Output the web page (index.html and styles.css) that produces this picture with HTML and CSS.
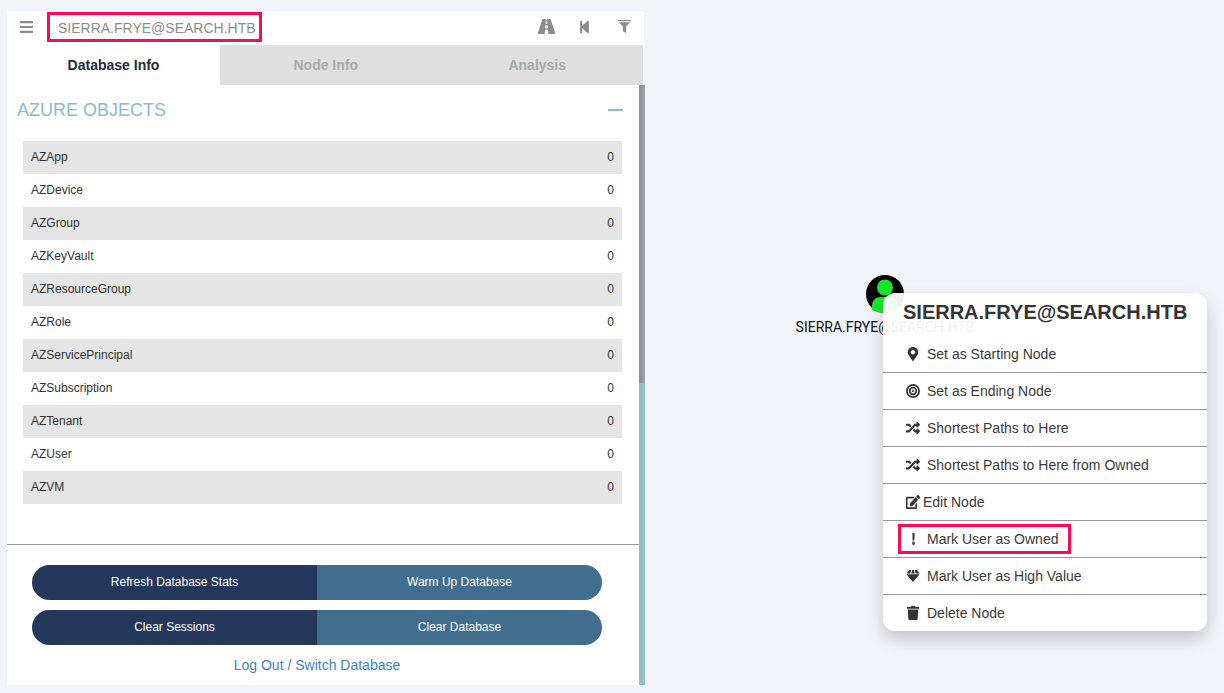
FILE: index.html
```html
<!DOCTYPE html>
<html lang="en">
<head>
  <meta charset="UTF-8">
  <title>BloodHound</title>
  <link rel="stylesheet" href="styles.css">
</head>
<body>

  <svg class="defs" width="0" height="0">
    <symbol id="i-random" viewBox="0 0 512 512"><path d="M504.971 359.029c9.373 9.373 9.373 24.569 0 33.941l-80 79.984c-15.01 15.01-40.971 4.49-40.971-16.971V416h-58.785a12.004 12.004 0 0 1-8.773-3.812l-70.556-75.596 53.333-57.143L352 336h32v-39.981c0-21.438 25.943-31.998 40.971-16.971l80 79.981zM12 176h84l52.781 56.551 53.333-57.143-70.556-75.596A11.999 11.999 0 0 0 122.785 96H12c-6.627 0-12 5.373-12 12v56c0 6.627 5.373 12 12 12zm372 0v39.984c0 21.46 25.961 31.98 40.971 16.971l80-79.984c9.373-9.373 9.373-24.569 0-33.941l-80-79.981C409.943 24.021 384 34.582 384 56.019V96h-58.785a12.004 12.004 0 0 0-8.773 3.812L96 336H12c-6.627 0-12 5.373-12 12v56c0 6.627 5.373 12 12 12h110.785c3.326 0 6.503-1.381 8.773-3.812L352 176h32z"/></symbol>
  </svg>

  <aside class="panel">
    <div class="topbar">
      <svg class="bar-icon menu-icon" viewBox="0 60 448 392" preserveAspectRatio="none"><path d="M16 132h416c8.837 0 16-7.163 16-16V76c0-8.837-7.163-16-16-16H16C7.163 60 0 67.163 0 76v40c0 8.837 7.163 16 16 16zm0 160h416c8.837 0 16-7.163 16-16v-40c0-8.837-7.163-16-16-16H16c-8.837 0-16 7.163-16 16v40c0 8.837 7.163 16 16 16zm0 160h416c8.837 0 16-7.163 16-16v-40c0-8.837-7.163-16-16-16H16c-8.837 0-16 7.163-16 16v40c0 8.837 7.163 16 16 16z"/></svg>
      <div class="search">SIERRA.FRYE@SEARCH.HTB</div>
      <div class="bar-actions">
        <svg class="bar-icon road-icon" viewBox="0 64 576 384" preserveAspectRatio="none"><path d="M573.19 402.67l-139.79-320C428.43 71.29 417.6 64 405.68 64h-97.59l2.45 23.16c.5 4.72-3.21 8.84-7.96 8.84h-29.16c-4.75 0-8.46-4.12-7.96-8.84L267.91 64h-97.59c-11.93 0-22.76 7.29-27.73 18.67L2.8 402.67C-6.45 423.86 8.31 448 30.54 448h196.84l10.31-97.68c.86-8.14 7.72-14.32 15.91-14.32h68.8c8.19 0 15.05 6.18 15.91 14.32L348.62 448h196.84c22.23 0 36.99-24.14 27.73-45.33zM260.4 135.16a8 8 0 0 1 7.96-7.16h39.29c4.09 0 7.53 3.09 7.96 7.16l4.6 43.58c.75 7.09-4.81 13.26-11.93 13.26h-40.54c-7.13 0-12.68-6.17-11.93-13.26l4.59-43.58zM315.64 304h-55.29c-9.5 0-16.91-8.23-15.91-17.68l5.07-48c.86-8.14 7.72-14.32 15.91-14.32h45.15c8.19 0 15.05 6.18 15.91 14.32l5.07 48c1 9.45-6.41 17.68-15.91 17.68z"/></svg>
        <svg class="bar-icon back-icon" viewBox="0 0 448 512"><path d="M64 468V44c0-6.6 5.4-12 12-12h48c6.6 0 12 5.4 12 12v176.4l195.5-181C352 20.9 384 35.3 384 64v384c0 28.7-32 43.1-52.5 24.5L136 291.7V468c0 6.6-5.4 12-12 12H76c-6.6 0-12-5.4-12-12z"/></svg>
        <svg class="bar-icon filter-icon" viewBox="0 0 512 512"><path d="M0 0h512v50H0zM30 90h452L320 250v262l-128-70V250z"/></svg>
      </div>
    </div>

    <div class="tabs">
      <div class="tab tab-active">Database Info</div>
      <div class="tab">Node Info</div>
      <div class="tab">Analysis</div>
    </div>

    <div class="panel-body">
      <div class="panel-main">
        <div class="stats">
          <div class="stats-head">
            <h3>AZURE OBJECTS</h3>
            <span class="collapse"></span>
          </div>
          <table class="stats-table">
            <tr><td>AZApp</td><td class="num">0</td></tr>
            <tr><td>AZDevice</td><td class="num">0</td></tr>
            <tr><td>AZGroup</td><td class="num">0</td></tr>
            <tr><td>AZKeyVault</td><td class="num">0</td></tr>
            <tr><td>AZResourceGroup</td><td class="num">0</td></tr>
            <tr><td>AZRole</td><td class="num">0</td></tr>
            <tr><td>AZServicePrincipal</td><td class="num">0</td></tr>
            <tr><td>AZSubscription</td><td class="num">0</td></tr>
            <tr><td>AZTenant</td><td class="num">0</td></tr>
            <tr><td>AZUser</td><td class="num">0</td></tr>
            <tr><td>AZVM</td><td class="num">0</td></tr>
          </table>
        </div>
        <div class="db-actions">
          <div class="btn-pair">
            <button class="btn btn-dark">Refresh Database Stats</button>
            <button class="btn btn-light">Warm Up Database</button>
          </div>
          <div class="btn-pair">
            <button class="btn btn-dark">Clear Sessions</button>
            <button class="btn btn-light">Clear Database</button>
          </div>
          <a class="logout" href="#">Log Out / Switch Database</a>
        </div>
      </div>
      <div class="scrollbar"><div class="thumb"></div></div>
    </div>
  </aside>

  <div class="node">
    <svg class="node-icon" viewBox="0 0 38 38">
      <circle cx="19" cy="19" r="19" fill="#000"/>
      <circle cx="19" cy="12.5" r="8" fill="#17e62f"/>
      <path d="M6 35v-4c0-6 4-9 9-9h8c5 0 9 3 9 9v4c-3 2-8 3-13 3s-10-1-13-3z" fill="#17e62f"/>
    </svg>
    <div class="node-label">SIERRA.FRYE@SEARCH.HTB</div>
  </div>

  <div class="context-menu">
    <div class="menu-title">SIERRA.FRYE@SEARCH.HTB</div>
    <div class="menu-row">
      <svg class="menu-ico" viewBox="0 0 384 512"><path d="M172.268 501.67C26.97 291.031 0 269.413 0 192 0 85.961 85.961 0 192 0s192 85.961 192 192c0 77.413-26.97 99.031-172.268 309.67-9.535 13.774-29.93 13.773-39.464 0zM192 272c44.183 0 80-35.817 80-80s-35.817-80-80-80-80 35.817-80 80 35.817 80 80 80z"/></svg>
      Set as Starting Node
    </div>
    <div class="menu-row">
      <svg class="menu-ico ico-target" viewBox="0 0 14 14">
        <circle cx="7" cy="7" r="6.1"/>
        <circle cx="7" cy="7" r="3.3"/>
        <circle class="target-dot" cx="7" cy="7" r="1.1"/>
      </svg>
      Set as Ending Node
    </div>
    <div class="menu-row">
      <svg class="menu-ico"><use href="#i-random"/></svg>
      Shortest Paths to Here
    </div>
    <div class="menu-row">
      <svg class="menu-ico"><use href="#i-random"/></svg>
      Shortest Paths to Here from Owned
    </div>
    <div class="menu-row menu-row-tight">
      <svg class="menu-ico ico-edit" viewBox="0 0 576 512" preserveAspectRatio="none"><path d="M402.6 83.2l90.2 90.2c3.8 3.8 3.8 10 0 13.8L274.4 405.6l-92.8 10.3c-12.4 1.4-22.9-9.1-21.5-21.5l10.3-92.8L388.8 83.2c3.8-3.8 10-3.8 13.8 0zm162-22.9l-48.8-48.8c-15.2-15.2-39.9-15.2-55.2 0l-35.4 35.4c-3.8 3.8-3.8 10 0 13.8l90.2 90.2c3.8 3.8 10 3.8 13.8 0l35.4-35.4c15.2-15.3 15.2-40 0-55.2zM384 346.2V448H64V128h229.8c3.2 0 6.2-1.3 8.5-3.5l40-40c7.6-7.6 2.2-20.5-8.5-20.5H48C21.5 64 0 85.5 0 112v352c0 26.5 21.5 48 48 48h352c26.5 0 48-21.5 48-48V306.2c0-10.7-12.9-16-20.5-8.5l-40 40c-2.2 2.3-3.5 5.3-3.5 8.5z"/></svg>
      Edit Node
    </div>
    <div class="menu-row">
      <svg class="menu-ico ico-bang" viewBox="0 0 192 512" preserveAspectRatio="none"><path d="M176 432c0 44.112-35.888 80-80 80s-80-35.888-80-80 35.888-80 80-80 80 35.888 80 80zM25.26 25.199l13.6 272C39.499 309.972 50.041 320 62.83 320h66.34c12.789 0 23.331-10.028 23.97-22.801l13.6-272C167.425 11.49 156.496 0 142.77 0H49.23C35.504 0 24.575 11.49 25.26 25.199z"/></svg>
      Mark User as Owned
      <span class="highlight"></span>
    </div>
    <div class="menu-row">
      <svg class="menu-ico ico-gem" viewBox="0 0 14 12"><path d="M3 0h2.4L4.2 3.4H.6zM6.2 0h1.6l1 3.4H5.2zM8.6 0H11l2.4 3.4H9.8zM.4 4.2h13.2L7 12z"/></svg>
      Mark User as High Value
    </div>
    <div class="menu-row">
      <svg class="menu-ico" viewBox="0 0 448 512"><path d="M432 32H312l-9.4-18.7A24 24 0 0 0 281.1 0H166.8a23.72 23.72 0 0 0-21.4 13.3L136 32H16A16 16 0 0 0 0 48v32a16 16 0 0 0 16 16h416a16 16 0 0 0 16-16V48a16 16 0 0 0-16-16zM53.2 467a48 48 0 0 0 47.9 45h245.8a48 48 0 0 0 47.9-45L416 128H32z"/></svg>
      Delete Node
    </div>
  </div>

</body>
</html>
```

FILE: styles.css
```css
html, body {
  height: 100%;
}
body {
  margin: 0;
  overflow: hidden;
  background: #f1f4f9;
  color: #333;
  font-family: "Liberation Sans", Arial, sans-serif;
}
.defs {
  position: absolute;
}

/* left panel, floats over the graph */
.panel {
  position: absolute;
  left: 7px;
  top: 11px;
  width: 638px;
  height: 674px;
  display: flex;
  flex-direction: column;
}
.topbar {
  width: 637px;
  height: 34px;
  box-sizing: border-box;
  background: #fff;
  display: flex;
  align-items: center;
  padding-left: 13px;
}
.bar-icon {
  display: block;
  fill: #8a8a90;
}
.menu-icon {
  width: 13px;
  height: 12px;
  margin-top: -2px;
}
.search {
  margin-left: 14px;
  width: 215px;
  height: 30px;
  margin-top: -3px;
  box-sizing: border-box;
  border: 3px solid #fb0a5b;
  padding-left: 8px;
  font-size: 14px;
  line-height: 26px;
  color: #8c8c8c;
  white-space: nowrap;
}
.bar-actions {
  margin-left: auto;
  display: flex;
  align-items: center;
  margin-top: -3px;
}
.road-icon {
  width: 17px;
  height: 15px;
}
.back-icon {
  width: 13px;
  height: 14px;
  margin-left: 23px;
}
.filter-icon {
  width: 13px;
  height: 15px;
  margin-left: 27px;
  margin-right: 13px;
}
.tabs {
  display: flex;
  width: 636px;
  height: 40px;
}
.tab {
  flex: 1;
  background: #dfdfdf;
  color: #a9a9ad;
  font-size: 14px;
  font-weight: bold;
  line-height: 40px;
  text-align: center;
}
.tab:first-child {
  flex: 0 0 213px;
}
.tab-active {
  background: #fff;
  color: #222c3f;
}
.panel-body {
  flex: 1;
  display: flex;
  min-height: 0;
}
.panel-main {
  width: 632px;
  background: #fff;
  display: flex;
  flex-direction: column;
}
.stats {
  height: 460px;
  box-sizing: border-box;
  border-bottom: 1px solid #999;
  padding: 0 16px 0 10px;
}
.stats-head {
  display: flex;
  align-items: center;
  justify-content: space-between;
  height: 50px;
  margin-bottom: 6px;
}
.stats-head h3 {
  margin: 0;
  font-size: 18px;
  font-weight: normal;
  color: #8ab9d1;
}
.collapse {
  width: 15px;
  height: 2px;
  background: #8ab9d1;
}
.stats-table {
  width: 599px;
  margin-left: 6px;
  border-collapse: collapse;
  font-size: 12px;
  color: #333;
}
.stats-table td {
  height: 33px;
  box-sizing: border-box;
  padding: 0 8px 2px;
}
.stats-table tr:nth-child(odd) {
  background: #e5e5e5;
}
.num {
  text-align: right;
}
.db-actions {
  display: flex;
  flex-direction: column;
  align-items: center;
  width: 570px;
  margin-left: 25px;
  padding-top: 20px;
  gap: 10px;
}
.btn-pair {
  display: flex;
  width: 100%;
  height: 35px;
  border-radius: 18px;
  overflow: hidden;
}
.btn {
  flex: 1;
  border: 0;
  padding: 0 0 2px;
  color: #fff;
  font-family: inherit;
  font-size: 12px;
}
.btn-dark {
  background: #24385b;
}
.btn-light {
  background: #416e8e;
}
.logout {
  margin-top: 2px;
  color: #3b82c4;
  font-size: 14px;
  text-decoration: none;
}
.scrollbar {
  width: 6px;
  background: #92bfc4;
}
.thumb {
  height: 298px;
  background: linear-gradient(to right, #8b8b90, #a5a5aa);
}

/* graph node */
.node {
  position: absolute;
  left: 785px;
  top: 275px;
  width: 200px;
  display: flex;
  flex-direction: column;
  align-items: center;
}
.node-icon {
  width: 38px;
  height: 38px;
}
.node-label {
  margin-top: 5px;
  font-family: Roboto, sans-serif;
  font-size: 14px;
  line-height: 18px;
  color: #111;
  white-space: nowrap;
}

/* right click menu */
.context-menu {
  position: absolute;
  left: 883px;
  top: 293px;
  width: 324px;
  background: rgba(255, 255, 255, 0.94);
  border-radius: 12px;
  box-shadow: 0 8px 18px rgba(0, 0, 0, 0.2);
}
.menu-title {
  height: 43px;
  padding-left: 20px;
  font-size: 20px;
  font-weight: bold;
  line-height: 38px;
  color: #333;
}
.menu-row {
  position: relative;
  display: flex;
  align-items: center;
  gap: 6px;
  height: 36px;
  padding-left: 22px;
  font-size: 14px;
  color: #3a3a3a;
  white-space: nowrap;
}
.menu-row + .menu-row {
  height: 37px;
  box-sizing: border-box;
  border-top: 1px solid #999;
}
.menu-row-tight {
  gap: 3px;
}
.menu-ico {
  width: 16px;
  height: 14px;
  fill: #333;
}
.ico-target {
  fill: none;
  stroke: #333;
  stroke-width: 1.7;
}
.target-dot {
  fill: #333;
  stroke: none;
}
.ico-edit {
  width: 14px;
  margin-left: 1px;
}
.ico-bang {
  width: 3px;
  height: 12px;
  margin: 0 6.5px;
}
.ico-gem {
  height: 12px;
}
.highlight {
  position: absolute;
  left: 15px;
  top: 3px;
  width: 173px;
  height: 30px;
  box-sizing: border-box;
  border: 3px solid #fb0a5b;
}
```
